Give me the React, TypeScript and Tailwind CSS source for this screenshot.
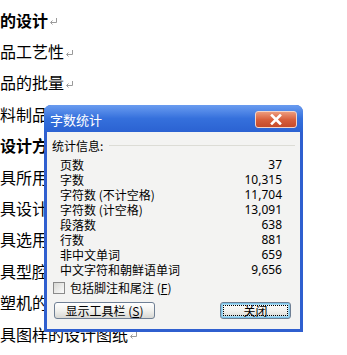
import { ReactNode } from "react";

const lines: { text: string; bold?: boolean; mark?: boolean }[] = [
  { text: "的设计", bold: true, mark: true },
  { text: "品工艺性", mark: true },
  { text: "品的批量", mark: true },
  { text: "料制品" },
  { text: "设计方", bold: true },
  { text: "具所用" },
  { text: "具设计" },
  { text: "具选用" },
  { text: "具型腔" },
  { text: "塑机的" },
  { text: "具图样的设计图纸", mark: true },
];

const stats = [
  ["页数", "37"],
  ["字数", "10,315"],
  ["字符数 (不计空格)", "11,704"],
  ["字符数 (计空格)", "13,091"],
  ["段落数", "638"],
  ["行数", "881"],
  ["非中文单词", "659"],
  ["中文字符和朝鲜语单词", "9,656"],
];

function ReturnMark() {
  return (
    <svg width="9" height="9" viewBox="0 0 9 9" className="ml-[1px] mt-[4px]">
      <path d="M7.5 1 V5.5 H2" fill="none" stroke="#9a9a9a" strokeWidth="1" />
      <path d="M3.5 3.5 L1.5 5.5 L3.5 7.5" fill="none" stroke="#9a9a9a" strokeWidth="1" />
    </svg>
  );
}

function XpButton({ children, focused }: { children: ReactNode; focused?: boolean }) {
  return (
    <div
      className={`relative h-[17px] rounded-[3px] border border-[#6f7f94] bg-gradient-to-b from-[#ffffff] via-[#f1f1ee] to-[#d8d8d4] flex items-center justify-center ${
        focused ? "shadow-[inset_0_0_0_1px_#7ec4e8,inset_0_0_0_2px_#a9dbf4]" : ""
      }`}
    >
      {focused && <div className="absolute inset-[2px] border border-dotted border-black" />}
      <span className="block leading-[15px]">{children}</span>
    </div>
  );
}

export default function App() {
  return (
    <div
      className="relative w-[347px] h-[355px] overflow-hidden bg-white text-black"
      style={{ fontFamily: '"Noto Sans CJK SC", "Noto Sans", sans-serif' }}
    >
      {/* document text behind */}
      <div className="flex flex-col pt-[4px]">
        {lines.map((l, i) => (
          <div key={i} className="h-[31.4px] flex items-center">
            <span className={`block text-[16px] leading-[20px] ${l.bold ? "font-bold" : ""}`}>{l.text}</span>
            {l.mark && <ReturnMark />}
          </div>
        ))}
      </div>

      {/* word count dialog */}
      <div className="absolute left-[44px] top-[105px] w-[259px] h-[227px] flex flex-col rounded-t-[7px] bg-[#2f5fcf] px-[3px] pb-[3px] text-[12px]">
        <div className="h-[27px] -mx-[3px] px-[6px] flex items-center justify-between rounded-t-[7px] bg-gradient-to-b from-[#6a9cf0] via-[#3570dc] to-[#2b62d2]">
          <span className="block text-white text-[13px] leading-[16px] mt-[2px]">字数统计</span>
          <div className="w-[42px] h-[17px] mt-[1px] rounded-[3px] border border-[#f4d4c8] bg-gradient-to-b from-[#ec9a7c] via-[#d8603d] to-[#c54a2a] flex items-center justify-center">
            <svg width="12" height="11" viewBox="0 0 12 11">
              <path d="M2 1.5 L10 9.5 M10 1.5 L2 9.5" stroke="#ffffff" strokeWidth="2.6" strokeLinecap="square" />
            </svg>
          </div>
        </div>

        <div className="flex-1 bg-[#f3f3f2] flex flex-col pt-[6px] pl-[5px] pr-[5px]">
          <div className="flex items-center h-[15px]">
            <span className="block leading-[15px]">统计信息:</span>
            <div className="flex-1 ml-[6px] h-px bg-[#dcdcd6]" />
          </div>

          <div className="flex flex-col mt-[4px] pl-[8px] pr-[13px]">
            {stats.map(([k, v]) => (
              <div key={k} className="h-[15px] flex items-center justify-between">
                <span className="block leading-[15px]">{k}</span>
                <span className="block leading-[15px]" style={{ fontFamily: '"Noto Sans", sans-serif' }}>
                  {v}
                </span>
              </div>
            ))}
          </div>

          <div className="flex items-center h-[15px] mt-[3px] pl-[1px]">
            <div className="w-[12px] h-[12px] border border-[#8a8a8a] bg-gradient-to-br from-[#d8d8d4] to-[#fbfbfb]" />
            <span className="block ml-[5px] leading-[15px]">
              包括脚注和尾注 (<span className="underline">F</span>)
            </span>
          </div>

          <div className="flex items-center justify-between mt-[7px] pl-[2px] pr-[4px]">
            <div className="w-[101px]">
              <XpButton>
                显示工具栏 (<span className="underline">S</span>)
              </XpButton>
            </div>
            <div className="w-[71px]">
              <XpButton focused>关闭</XpButton>
            </div>
          </div>
        </div>
      </div>
    </div>
  );
}
